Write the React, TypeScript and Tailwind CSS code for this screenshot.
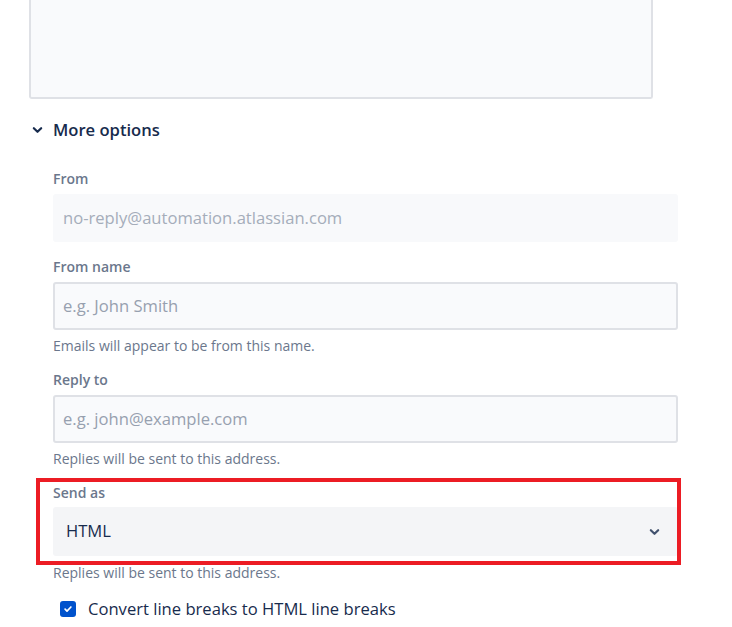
import React from "react";

const font = { fontFamily: '"Open Sans", "Noto Sans", Arial, sans-serif' };

function Chevron({ className }: { className?: string }) {
  return (
    <svg viewBox="0 0 12 8" className={className} fill="none">
      <path d="M2 2l4 4 4-4" stroke="currentColor" strokeWidth="2.4" strokeLinecap="round" strokeLinejoin="round" />
    </svg>
  );
}

function Label({ children }: { children: React.ReactNode }) {
  return <div className="h-5 leading-5 text-[14px] font-semibold text-[#6b778c]">{children}</div>;
}

function Helper({ children }: { children: React.ReactNode }) {
  return <div className="h-5 leading-5 text-[14px] text-[#6b778c]">{children}</div>;
}

export default function App() {
  return (
    <div className="w-[732px] h-[627px] bg-white overflow-hidden relative" style={font}>
      <div className="ml-[29px] w-[624px] h-[99px] bg-[#f9fafc] border-x-2 border-b-2 border-[#dfe1e6] rounded-b-[3px]" />

      <div className="flex items-center h-6 mt-[19px] ml-[32px] gap-[10px]">
        <Chevron className="w-[11px] h-[8px] text-[#172b4d]" />
        <span className="text-[16.6px] font-semibold text-[#172b4d] leading-6">More options</span>
      </div>

      <div className="ml-[53px] w-[625px] mt-[27px] flex flex-col">
        <Label>From</Label>
        <div className="mt-[5px] h-[48px] bg-[#f8f9fb] rounded-[3px] flex items-center px-[10px] text-[16.6px] text-[#a5adba]">
          no-reply@automation.atlassian.com
        </div>

        <div className="mt-[15px]">
          <Label>From name</Label>
        </div>
        <div className="mt-[5px] h-[48px] bg-[#f9fafc] border-2 border-[#dfe1e6] rounded-[3px] flex items-center px-[8px] text-[16.6px] text-[#97a0af]">
          e.g. John Smith
        </div>
        <div className="mt-[6px]">
          <Helper>Emails will appear to be from this name.</Helper>
        </div>

        <div className="mt-[14px]">
          <Label>Reply to</Label>
        </div>
        <div className="mt-[5px] h-[48px] bg-[#f9fafc] border-2 border-[#dfe1e6] rounded-[3px] flex items-center px-[8px] text-[16.6px] text-[#97a0af]">
          e.g. john@example.com
        </div>
        <div className="mt-[6px]">
          <Helper>Replies will be sent to this address.</Helper>
        </div>

        <div className="mt-[14px]">
          <Label>Send as</Label>
        </div>
        <div className="mt-[4px] h-[49px] bg-[#f4f5f7] rounded-[3px] flex items-center justify-between pl-[13px] pr-[18px] text-[16.6px] text-[#172b4d]">
          <span>HTML</span>
          <Chevron className="w-[11px] h-[8px] text-[#42526e]" />
        </div>
        <div className="mt-[7px]">
          <Helper>Replies will be sent to this address.</Helper>
        </div>

        <div className="mt-[14px] flex items-center h-6 ml-[7px] gap-[12px]">
          <div className="w-[16px] h-[16px] rounded-[3px] bg-[#0052cc] flex items-center justify-center">
            <svg viewBox="0 0 12 12" className="w-[10px] h-[10px]" fill="none">
              <path d="M2.5 6.2l2.3 2.3 4.7-4.9" stroke="white" strokeWidth="2" strokeLinecap="round" strokeLinejoin="round" />
            </svg>
          </div>
          <span className="text-[16.6px] text-[#172b4d]">Convert line breaks to HTML line breaks</span>
        </div>
      </div>

      <div className="absolute left-[36px] top-[478px] w-[645px] h-[87px] border-4 border-[#ec1c24] pointer-events-none" />
    </div>
  );
}
